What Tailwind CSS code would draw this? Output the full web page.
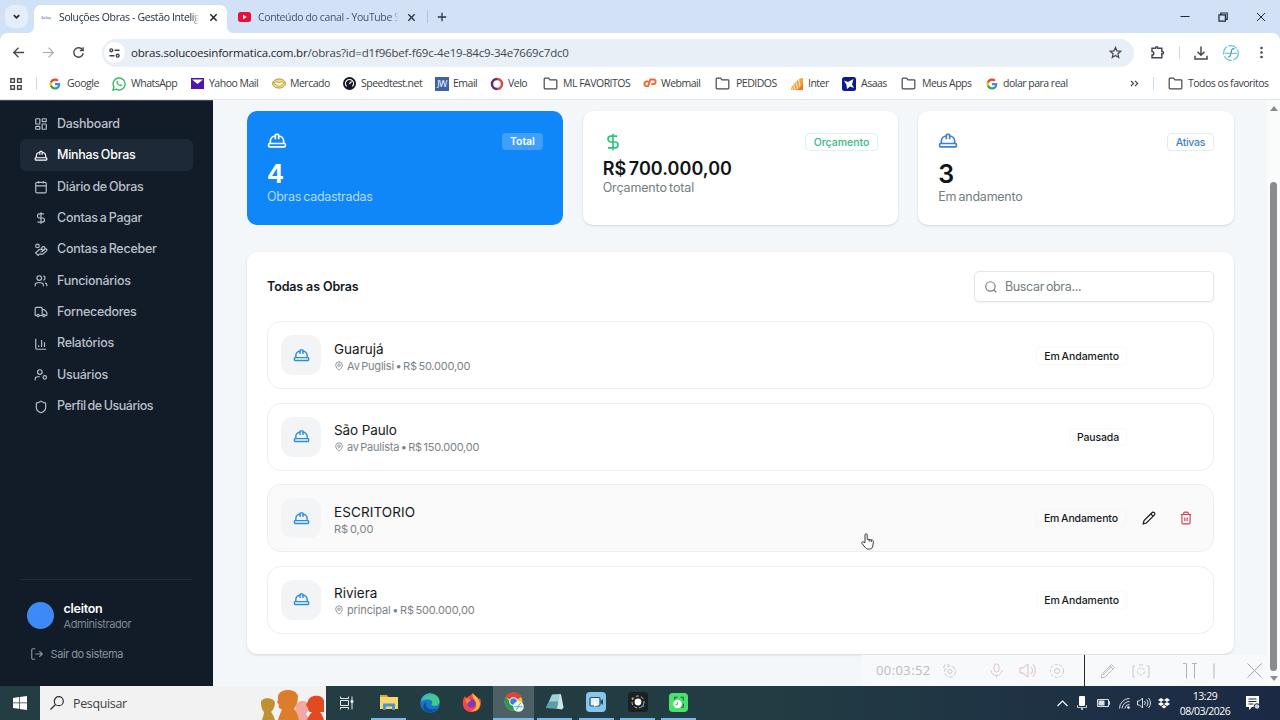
<!DOCTYPE html>
<html lang="pt-BR">
<head>
    <meta charset="UTF-8">
    <meta name="viewport" content="width=device-width, initial-scale=1.0">
    <title>Soluções Obras - Gestão Inteligente</title>
    <script src="https://cdn.jsdelivr.net/npm/@tailwindcss/browser@4"></script>
</head>
<body class="w-[1280px] h-[720px] overflow-hidden flex flex-col bg-white font-['Open_Sans','Noto_Sans',sans-serif] text-[#3c4043]">

    <!-- Icon sprite -->
    <svg class="hidden">
        <symbol id="hat" viewBox="0 0 24 24"><path d="M2 18a1 1 0 0 0 1 1h18a1 1 0 0 0 1-1v-2a1 1 0 0 0-1-1H3a1 1 0 0 0-1 1v2z"/><path d="M10 10V5a1 1 0 0 1 1-1h2a1 1 0 0 1 1 1v5"/><path d="M4 15v-3a6 6 0 0 1 6-6"/><path d="M14 6a6 6 0 0 1 6 6v3"/></symbol>
        <symbol id="dollar" viewBox="0 0 24 24"><path d="M12 2v20"/><path d="M17 5H9.5a3.5 3.5 0 0 0 0 7h5a3.5 3.5 0 0 1 0 7H6"/></symbol>
        <symbol id="pin" viewBox="0 0 24 24"><path d="M20 10c0 6-8 12-8 12s-8-6-8-12a8 8 0 0 1 16 0Z"/><circle cx="12" cy="10" r="3"/></symbol>
        <symbol id="search" viewBox="0 0 24 24"><circle cx="11" cy="11" r="8"/><path d="m21 21-4.3-4.3"/></symbol>
        <symbol id="folder" viewBox="0 0 16 14"><path d="M1.2 2.2a.9.9 0 0 1 .9-.9h3.7l1.7 1.8h6.4a.9.9 0 0 1 .9.9v7.8a.9.9 0 0 1-.9.9H2.1a.9.9 0 0 1-.9-.9z"/></symbol>
        <symbol id="google" viewBox="0 0 24 24"><path fill="#4285f4" d="M22.5 12.3c0-.8-.1-1.5-.2-2.2H12v4.2h5.9a5 5 0 0 1-2.2 3.3v2.8h3.6c2.1-2 3.2-4.8 3.2-8.1z"/><path fill="#34a853" d="M12 23c3 0 5.5-1 7.3-2.6l-3.6-2.8a6.7 6.7 0 0 1-9.9-3.5H2.2v2.8A11 11 0 0 0 12 23z"/><path fill="#fbbc05" d="M5.8 14.1a6.6 6.6 0 0 1 0-4.2V7.1H2.2a11 11 0 0 0 0 9.9z"/><path fill="#ea4335" d="M12 5.4c1.6 0 3.1.6 4.2 1.6l3.2-3.1A11 11 0 0 0 2.2 7.1l3.6 2.8A6.6 6.6 0 0 1 12 5.4z"/></symbol>
    </svg>

    <!-- Tab strip -->
    <div class="h-[33px] shrink-0 bg-[#d2e1f6] flex pl-[5px] text-[10.5px]">
        <div class="w-[23px] h-[23px] mt-[5px] rounded-lg bg-[#e3edfb] flex items-center justify-center">
            <svg class="size-[9px] fill-none stroke-[#1f2937] stroke-2" viewBox="0 0 10 10"><path d="M2 3.5 5 6.5 8 3.5"/></svg>
        </div>
        <svg class="w-[6px] h-[6px] self-end fill-white" viewBox="0 0 6 6"><path d="M6 0v6H0a6 6 0 0 0 6-6z"/></svg>
        <div class="w-[193px] h-[28px] mt-[5px] rounded-t-[7px] bg-white flex items-center pl-[7px] pr-[9px] pb-[3px]">
            <span class="w-[18px] text-[4px] leading-none italic font-bold text-[#7f9db5]">Soluç</span>
            <span class="whitespace-nowrap tracking-[-0.37px] text-[#1f2937] mask-r-from-95%">Soluções Obras - Gestão Intelig</span>
            <svg class="ml-auto size-[9px] fill-none stroke-[#1f1f1f] stroke-[1.6]" viewBox="0 0 10 10"><path d="m1.5 1.5 7 7m0-7-7 7"/></svg>
        </div>
        <svg class="w-[6px] h-[6px] self-end fill-white" viewBox="0 0 6 6"><path d="M0 0v6h6a6 6 0 0 1-6-6z"/></svg>
        <div class="w-[186px] flex items-center pl-[5px] pt-px">
            <svg class="w-[13px] h-[10px]" viewBox="0 0 13 10"><rect width="13" height="10" rx="2.5" fill="#e8103a"/><path d="M5 2.7v4.6L8.8 5z" fill="#fff"/></svg>
            <span class="ml-[7px] w-[141px] pt-px whitespace-nowrap tracking-[-0.38px] text-[#44546a] mask-r-from-94%">Conteúdo do canal - YouTube S</span>
            <svg class="ml-[8px] size-[9px] fill-none stroke-[#2b3646] stroke-[1.5]" viewBox="0 0 10 10"><path d="m1.5 1.5 7 7m0-7-7 7"/></svg>
        </div>
        <div class="w-[29px] flex items-center pl-[8px]">
            <span class="w-px h-[13px] bg-[#a9c2ea]"></span>
        </div>
        <div class="self-center -ml-[11px]">
            <svg class="size-[10px] fill-none stroke-[#2b3646] stroke-[1.3]" viewBox="0 0 10 10"><path d="M5 .8v8.4M.8 5h8.4"/></svg>
        </div>
        <div class="ml-auto flex items-center gap-[28px] pr-[14px]">
            <svg class="size-[10px] fill-none stroke-[#1f2937] stroke-1" viewBox="0 0 10 10"><path d="M.5 4.5h9"/></svg>
            <svg class="size-[10px] fill-none stroke-[#1f2937] stroke-[1.2]" viewBox="0 0 10 10"><path d="M1 2.8h6.4v6.4H1zM2.8 2.6V1h6.4v6.4H7.6"/></svg>
            <svg class="size-[10px] fill-none stroke-[#1f2937] stroke-1" viewBox="0 0 10 10"><path d="m1 1 8 8m0-8-8 8"/></svg>
        </div>
    </div>

    <!-- Toolbar -->
    <div class="h-[39px] shrink-0 bg-[#d2e1f6]">
        <div class="h-full bg-white rounded-t-[8px] flex items-center pl-[12px]">
            <svg class="size-[13px] fill-none stroke-[#45494d] stroke-[1.4]" viewBox="0 0 14 14"><path d="M13 7H2M7 1.8 1.8 7 7 12.2"/></svg>
            <svg class="size-[13px] ml-[17px] fill-none stroke-[#a9adb1] stroke-[1.3]" viewBox="0 0 14 14"><path d="M1 7h11M7 1.8 12.2 7 7 12.2"/></svg>
            <svg class="size-[13px] ml-[17px] fill-none stroke-[#45494d] stroke-[1.5]" viewBox="0 0 14 14"><path d="M11.5 4.4a5.1 5.1 0 1 0 .6 3.4M12 1.3v3.6H8.4"/></svg>
            <div class="ml-[17px] w-[1032px] h-[28px] rounded-full bg-[#e9eff6] flex items-center pl-[2px] pr-[12px]">
                <span class="size-[21px] rounded-full bg-white flex items-center justify-center">
                    <svg class="w-[11px] h-[10px] fill-none stroke-[#3c4043] stroke-[1.4]" viewBox="0 0 11 10"><circle cx="2.3" cy="2.3" r="1.4"/><path d="M5.5 2.3h5M.5 7.7h5"/><circle cx="8.7" cy="7.7" r="1.4"/></svg>
                </span>
                <span class="ml-[6px] pt-px text-[11.5px] tracking-[-0.19px] text-[#3f464d]"><span class="text-[#1f2429]">obras.solucoesinformatica.com.br</span>/obras?id=d1f96bef-f69c-4e19-84c9-34e7669c7dc0</span>
                <svg class="ml-auto size-[13px] fill-none stroke-[#45494d] stroke-[1.3]" viewBox="0 0 14 14"><path d="m7 1.5 1.6 3.8 4.1.4-3.1 2.7.9 4L7 10.3l-3.5 2.1.9-4-3.1-2.7 4.1-.4z"/></svg>
            </div>
            <svg class="ml-[16px] size-[15px] fill-none stroke-[#45494d] stroke-[1.5]" viewBox="0 0 15 15"><path d="M2 3.2h3.6V2.8a1.1 1.1 0 0 1 2.2 0v.4h4V6.6h.6a1.1 1.1 0 0 1 0 2.2h-.6v4H2V10a1.6 1.6 0 0 0 0-3.6z"/></svg>
            <span class="ml-[14px] w-px h-[13px] bg-[#c9dcf3]"></span>
            <svg class="ml-[14px] size-[14px] fill-none stroke-[#45494d] stroke-[1.5]" viewBox="0 0 14 14"><path d="M7 .5v8.5M3.5 5.8 7 9.2l3.5-3.4M1 9.8V13h12V9.8"/></svg>
            <svg class="ml-[15px] size-[16px] fill-none" viewBox="0 0 16 16"><circle cx="8" cy="8" r="7.3" stroke="#62c3cb" stroke-width="1.2" stroke-dasharray="9 1.5"/><path d="M11.5 3.8c-2.5-.6-3 1-3.3 3.2-.3 2.8-.7 5-3.2 5.2" stroke="#2fa7b5" stroke-width="1.3"/><path d="M2 8.3h12" stroke="#76a9b4"/></svg>
            <svg class="ml-[15px] w-[15px] h-[13px] fill-[#45494d]" viewBox="0 0 15 13"><circle cx="7.5" cy="2" r="1.3"/><circle cx="7.5" cy="6.5" r="1.3"/><circle cx="7.5" cy="11" r="1.3"/></svg>
        </div>
    </div>

    <!-- Bookmarks bar -->
    <div class="h-[28px] shrink-0 bg-white border-b border-[#dfe3e6] flex items-center pb-[4px] pl-[10px] text-[10.5px] tracking-[-0.5px] whitespace-nowrap">
        <svg class="w-[12px] h-[12px] mr-[14px] fill-none stroke-[#45494d] stroke-[1.4]" viewBox="0 0 12 12"><path d="M.8.8h3.6v3.6H.8zM7.6.8h3.6v3.6H7.6zM.8 7.6h3.6v3.6H.8zM7.6 7.6h3.6v3.6H7.6z"/></svg>
        <span class="w-px h-[13px] mr-[12px] bg-[#c9dcf3]"></span>
        <div class="w-[63px] flex items-center tracking-[-0.4px]"><svg class="size-[12px] mr-[6px]"><use href="#google"/></svg>Google</div>
        <div class="w-[78px] flex items-center"><svg class="size-[14px] mr-[5px] fill-none" viewBox="0 0 14 14"><path d="M1 13l.9-3.1A6 6 0 1 1 4.2 12.2z" stroke="#3dbb68" stroke-width="1.4"/><path d="M4.7 4c.8-.6 1.1 0 1.4.9.2.5-.5.7-.3 1.2.5.9 1.2 1.5 2.1 1.8.5.1.7-.8 1.2-.6.8.3 1.4.6.9 1.3C8.8 10.5 3 7.5 4.7 4z" fill="#3dbb68"/></svg>WhatsApp</div>
        <div class="w-[82px] flex items-center"><svg class="w-[13px] h-[11px] mr-[5px] ml-px" viewBox="0 0 13 11"><path fill="#5015b0" d="M0 0h13v11H0z"/><path fill="#fff" d="M1 1.5h11L6.5 6z"/></svg>Yahoo Mail</div>
        <div class="w-[70px] flex items-center"><svg class="w-[14px] h-[11px] mr-[4px]" viewBox="0 0 14 11"><ellipse cx="7" cy="5.5" rx="6.5" ry="4.6" fill="#f0dc74" stroke="#ab9a46"/><path d="M1.5 4.6 5 3.8l2 1 2-1 3.5.8-3 2.8-2.5 1-2.5-1z" fill="#f6f2dc" stroke="#9a8c42" stroke-width=".6"/></svg>Mercado</div>
        <div class="w-[93px] flex items-center"><svg class="size-[13px] mr-[5px] ml-px" viewBox="0 0 13 13"><circle cx="6.5" cy="6.5" r="6.5" fill="#141528"/><path d="M3.6 9.3a4 4 0 1 1 5.8 0M6.3 6.8l2.2-2.3" fill="none" stroke="#fff" stroke-width="1.2"/></svg>Speedtest.net</div>
        <div class="w-[55px] flex items-center"><span class="size-[14px] mr-[4px] bg-[#3e62a8] text-white text-[9px] leading-[14px] text-center tracking-[-0.5px]">JW</span>Email</div>
        <div class="w-[53px] flex items-center"><svg class="size-[14px] mr-[4px] fill-none" viewBox="0 0 14 14"><path d="M7 2a5 5 0 0 0 0 10" stroke="#5c2c78" stroke-width="2.5"/><path d="M7 2a5 5 0 0 1 0 10" stroke="#d9453f" stroke-width="2.5"/></svg>Velo</div>
        <div class="w-[100px] flex items-center"><svg class="w-[15px] h-[13px] mr-[5px] fill-none stroke-[#45494d] stroke-[1.3]"><use href="#folder"/></svg>ML FAVORITOS</div>
        <div class="w-[72px] flex items-center"><svg class="w-[14px] h-[11px] mr-[4px] fill-none stroke-[#ec6a35] stroke-[1.9]" viewBox="0 0 14 11"><path d="M5.5 3.5H3.7a2.3 2.3 0 0 0 0 4.6h1.5L7.3 1.5h3a2.3 2.3 0 0 1 0 4.6H8.2"/></svg>Webmail</div>
        <div class="w-[76px] flex items-center"><svg class="w-[15px] h-[13px] mr-[6px] fill-none stroke-[#45494d] stroke-[1.3]"><use href="#folder"/></svg>PEDIDOS</div>
        <div class="w-[51px] flex items-center"><svg class="w-[12px] h-[12px] mr-[5px]" viewBox="0 0 12 12"><path fill="#f5a342" d="M0 12V8.5l2-1V6l2-.5V4l2.3-1V2L9 .5 12 0v12z"/><path d="M1.5 11.5 0 7.5M4 11.5 2 5.5M7 11 4.5 3M9.5 11 7.5 1" fill="none" stroke="#fff" stroke-width=".8"/><path d="M5 12c3-1 5-4 7-7v7z" fill="#ec7a1c"/></svg>Inter</div>
        <div class="w-[59px] flex items-center"><svg class="size-[14px] mr-[5px]" viewBox="0 0 14 14"><rect width="14" height="14" rx="2.5" fill="#0a1a94"/><path fill="#fff" d="M2 3.5 6 5l5.5-3L10 7.5 12 11 8 9.5 5 12l-.5-4z"/></svg>Asaas</div>
        <div class="w-[85px] flex items-center"><svg class="w-[15px] h-[13px] mr-[6px] fill-none stroke-[#45494d] stroke-[1.3]"><use href="#folder"/></svg>Meus Apps</div>
        <div class="flex items-center"><svg class="size-[12px] mr-[5px]"><use href="#google"/></svg>dolar para real</div>
        <svg class="ml-auto size-[9px] fill-none stroke-[#3c4043] stroke-[1.3]" viewBox="0 0 10 10"><path d="m1 2 3 3-3 3M5.5 2l3 3-3 3"/></svg>
        <span class="w-px h-[13px] ml-[14px] mr-[14px] bg-[#c9dcf3]"></span>
        <div class="w-[112px] flex items-center"><svg class="w-[15px] h-[13px] mr-[5px] fill-none stroke-[#45494d] stroke-[1.3]"><use href="#folder"/></svg>Todos os favoritos</div>
    </div>

    <!-- Page -->
    <div class="h-[586px] shrink-0 flex bg-[#f4f7f9] font-['Inter','Open_Sans',sans-serif]">

        <!-- Sidebar -->
        <aside class="w-[213px] bg-[#121b28] border-t border-[#3c4956] pl-[20px] pr-[20px] flex flex-col text-[#b9c0ca]">
            <nav class="pt-[7px] flex flex-col text-[12.5px] font-medium tracking-[-0.27px] [word-spacing:-1px]">
                <a class="h-[31.35px] pl-[13.5px] pt-[1.5px] flex items-center gap-[9.5px]"><svg class="size-[14px] fill-none stroke-current stroke-2" viewBox="0 0 24 24"><rect width="7" height="9" x="3" y="3" rx="1"/><rect width="7" height="5" x="14" y="3" rx="1"/><rect width="7" height="9" x="14" y="12" rx="1"/><rect width="7" height="5" x="3" y="16" rx="1"/></svg>Dashboard</a>
                <a class="h-[31.35px] pl-[13.5px] pt-[1.5px] flex items-center gap-[9.5px] rounded-md bg-[#1e2937] text-white"><svg class="size-[14px] fill-none stroke-current stroke-2"><use href="#hat"/></svg>Minhas Obras</a>
                <a class="h-[31.35px] pl-[13.5px] pt-[1.5px] flex items-center gap-[9.5px]"><svg class="size-[14px] fill-none stroke-current stroke-2" viewBox="0 0 24 24"><path d="M8 2v4M16 2v4M3 10h18"/><rect width="18" height="18" x="3" y="4" rx="2"/></svg>Diário de Obras</a>
                <a class="h-[31.35px] pl-[13.5px] pt-[1.5px] flex items-center gap-[9.5px]"><svg class="size-[14px] fill-none stroke-current stroke-2"><use href="#dollar"/></svg>Contas a Pagar</a>
                <a class="h-[31.35px] pl-[13.5px] pt-[1.5px] flex items-center gap-[9.5px]"><svg class="size-[14px] fill-none stroke-current stroke-2" viewBox="0 0 24 24"><path d="M11 15h2a2 2 0 1 0 0-4h-3c-.6 0-1.1.2-1.4.6L3 17"/><path d="m7 21 1.6-1.4c.3-.4.8-.6 1.4-.6h4c1.1 0 2.1-.4 2.8-1.2l4.6-4.4a2 2 0 0 0-2.75-2.91l-4.2 3.9"/><path d="m2 16 6 6"/><circle cx="16" cy="9" r="2.9"/><circle cx="6" cy="5" r="3"/></svg>Contas a Receber</a>
                <a class="h-[31.35px] pl-[13.5px] pt-[1.5px] flex items-center gap-[9.5px]"><svg class="size-[14px] fill-none stroke-current stroke-2" viewBox="0 0 24 24"><path d="M16 21v-2a4 4 0 0 0-4-4H6a4 4 0 0 0-4 4v2"/><circle cx="9" cy="7" r="4"/><path d="M22 21v-2a4 4 0 0 0-3-3.87M16 3.13a4 4 0 0 1 0 7.75"/></svg>Funcionários</a>
                <a class="h-[31.35px] pl-[13.5px] pt-[1.5px] flex items-center gap-[9.5px]"><svg class="size-[14px] fill-none stroke-current stroke-2" viewBox="0 0 24 24"><path d="M14 18V6a2 2 0 0 0-2-2H4a2 2 0 0 0-2 2v11a1 1 0 0 0 1 1h2M15 18H9M19 18h2a1 1 0 0 0 1-1v-3.65a1 1 0 0 0-.22-.62l-3.48-4.35A1 1 0 0 0 17.52 8H14"/><circle cx="17" cy="18" r="2"/><circle cx="7" cy="18" r="2"/></svg>Fornecedores</a>
                <a class="h-[31.35px] pl-[13.5px] pt-[1.5px] flex items-center gap-[9.5px]"><svg class="size-[14px] fill-none stroke-current stroke-2" viewBox="0 0 24 24"><path d="M3 3v16a2 2 0 0 0 2 2h16M8 17v-3M13 17V5M18 17V9"/></svg>Relatórios</a>
                <a class="h-[31.35px] pl-[13.5px] pt-[1.5px] flex items-center gap-[9.5px]"><svg class="size-[14px] fill-none stroke-current stroke-2" viewBox="0 0 24 24"><circle cx="10" cy="7" r="4"/><path d="M10 15H6a4 4 0 0 0-4 4v2"/><circle cx="18.5" cy="16" r="3"/></svg>Usuários</a>
                <a class="h-[31.35px] pl-[13.5px] pt-[1.5px] flex items-center gap-[9.5px]"><svg class="size-[14px] fill-none stroke-current stroke-2" viewBox="0 0 24 24"><path d="M20 13c0 5-3.5 7.5-7.66 8.95a1 1 0 0 1-.67-.01C7.5 20.5 4 18 4 13V6a1 1 0 0 1 1-1c2 0 4.5-1.2 6.24-2.72a1.17 1.17 0 0 1 1.52 0C14.51 3.81 17 5 19 5a1 1 0 0 1 1 1z"/></svg><span class="tracking-[-0.45px]">Perfil de Usuários</span></a>
            </nav>
            <div class="mt-auto h-[107px] border-t border-[#1f2a38] pt-[21px]">
                <div class="flex items-center pl-[6.5px] gap-[10px]">
                    <span class="size-[27px] -mt-px rounded-full bg-linear-to-br from-[#3b8df8] to-[#3f86f7]"></span>
                    <div class="flex flex-col">
                        <span class="text-[12.5px] leading-[16px] font-semibold text-white tracking-[-0.25px]">cleiton</span>
                        <span class="text-[11px] leading-[14px] text-[#7f8996] tracking-[-0.4px]">Administrador</span>
                    </div>
                </div>
                <div class="mt-[15px] pl-[10px] flex items-center gap-[6.5px] text-[11px] leading-[16px] text-[#8a939f] tracking-[-0.4px] [word-spacing:-0.5px]">
                    <svg class="size-[14px] fill-none stroke-current stroke-2" viewBox="0 0 24 24"><path d="M9 21H5a2 2 0 0 1-2-2V5a2 2 0 0 1 2-2h4M16 17l5-5-5-5M21 12H9"/></svg>Sair do sistema
                </div>
            </div>
        </aside>

        <!-- Content -->
        <main class="w-[1054px] pt-[11px] pl-[34px] pr-[33px] flex flex-col">
            <div class="grid grid-cols-3 gap-[20px] h-[114px] shrink-0">
                <div class="rounded-[10px] bg-[#1087f8] px-[20px] pt-[20px] text-white">
                    <div class="flex items-center justify-between h-[20px]">
                        <svg class="size-[20px] fill-none stroke-current stroke-2"><use href="#hat"/></svg>
                        <span class="h-[17px] px-[8px] rounded-[4px] bg-white/20 text-[10.5px] leading-[17px] font-semibold tracking-[-0.1px]">Total</span>
                    </div>
                    <p class="mt-[8px] text-[25px] leading-[30px] font-bold">4</p>
                    <p class="text-[12.5px] leading-[16px] text-[#b5dafd] tracking-[-0.3px] [word-spacing:-1px]">Obras cadastradas</p>
                </div>
                <div class="rounded-[10px] bg-white shadow-sm px-[20px] pt-[20px] text-[#0f1417]">
                    <div class="flex items-center justify-between h-[21px]">
                        <svg class="size-[20px] fill-none stroke-[#2cc47e] stroke-2"><use href="#dollar"/></svg>
                        <span class="h-[18px] px-[8px] rounded-[4px] border border-[#dcf5ea] text-[10.5px] leading-[17px] font-medium text-[#35b983]">Orçamento</span>
                    </div>
                    <p class="mt-[6px] text-[18px] leading-[22px] font-semibold tracking-[0.05px] [word-spacing:-2px]">R$ 700.000,00</p>
                    <p class="text-[12.5px] leading-[16px] text-[#737d80] tracking-[-0.15px] [word-spacing:-1px]">Orçamento total</p>
                </div>
                <div class="rounded-[10px] bg-white shadow-sm px-[20px] pt-[20px] text-[#0f1417]">
                    <div class="flex items-center justify-between h-[20px]">
                        <svg class="size-[20px] fill-none stroke-[#3f80cf] stroke-2"><use href="#hat"/></svg>
                        <span class="mt-px h-[18px] px-[8px] rounded-[4px] border border-[#dfedf7] text-[10.5px] leading-[17px] font-medium text-[#3f7fc8] tracking-[-0.3px]">Ativas</span>
                    </div>
                    <p class="mt-[8px] text-[25px] leading-[30px] font-semibold">3</p>
                    <p class="text-[12.5px] leading-[16px] text-[#737d80] tracking-[-0.25px] [word-spacing:-1px]">Em andamento</p>
                </div>
            </div>

            <!-- Works list -->
            <section class="mt-[27px] h-[402px] shrink-0 rounded-[10px] bg-white shadow-sm px-[20px] pt-[19px]">
                <div class="flex items-center justify-between h-[31px]">
                    <h2 class="pt-[2px] text-[12.5px] font-semibold text-[#14181b] tracking-[-0.13px]">Todas as Obras</h2>
                    <div class="w-[240px] h-[31px] rounded-[5px] border border-[#e3e6e8] shadow-xs flex items-center pl-[9px] gap-[7px] text-[12.5px] leading-[20px] text-[#737d80] tracking-[-0.35px] [word-spacing:-1.3px]">
                        <svg class="size-[14px] fill-none stroke-[#737d80] stroke-2"><use href="#search"/></svg><span class="pt-px">Buscar obra...</span>
                    </div>
                </div>
                <div class="mt-[19px] flex flex-col gap-[13.5px]">
                    <div class="h-[68px] rounded-[14px] border border-[#eceef0] px-[13px] flex items-center">
                        <span class="size-[40px] rounded-[12px] bg-[#f2f4f6] flex items-center justify-center"><svg class="size-[17px] fill-none stroke-[#2b8fd6] stroke-2"><use href="#hat"/></svg></span>
                        <div class="ml-[13px] pt-[5px] flex flex-col">
                            <span class="text-[13.5px] leading-[17px] text-[#16191c]">Guarujá</span>
                            <span class="flex items-center gap-[3px] text-[11px] leading-[16px] text-[#7b8287] tracking-[-0.2px] [word-spacing:-1.3px]"><svg class="size-[10px] fill-none stroke-current stroke-2"><use href="#pin"/></svg>Av Puglisi • R$ 50.000,00</span>
                        </div>
                        <span class="ml-auto mr-[73px] mt-px h-[18px] px-[7px] rounded-[4px] border border-[#f8f9f9] text-[10.5px] leading-[17px] font-medium text-[#16191c] tracking-[-0.05px] [word-spacing:-1px]">Em Andamento</span>
                    </div>
                    <div class="h-[68px] rounded-[14px] border border-[#eceef0] px-[13px] flex items-center">
                        <span class="size-[40px] rounded-[12px] bg-[#f2f4f6] flex items-center justify-center"><svg class="size-[17px] fill-none stroke-[#2b8fd6] stroke-2"><use href="#hat"/></svg></span>
                        <div class="ml-[13px] pt-[3px] flex flex-col">
                            <span class="text-[13.5px] leading-[17px] text-[#16191c] tracking-[-0.1px]">São Paulo</span>
                            <span class="flex items-center gap-[3px] text-[11px] leading-[16px] text-[#7b8287] tracking-[-0.23px] [word-spacing:-1.3px]"><svg class="size-[10px] fill-none stroke-current stroke-2"><use href="#pin"/></svg>av Paulista • R$ 150.000,00</span>
                        </div>
                        <span class="ml-auto mr-[73px] h-[18px] px-[7px] rounded-[4px] border border-[#f8f9f9] text-[10.5px] leading-[17px] font-medium text-[#16191c] tracking-[-0.15px]">Pausada</span>
                    </div>
                    <div class="h-[68px] rounded-[14px] border border-[#eceef0] bg-[#fafafa] px-[13px] flex items-center">
                        <span class="size-[40px] rounded-[12px] bg-[#f2f4f6] flex items-center justify-center"><svg class="size-[17px] fill-none stroke-[#2b8fd6] stroke-2"><use href="#hat"/></svg></span>
                        <div class="ml-[13px] pt-[4px] flex flex-col">
                            <span class="text-[13.5px] leading-[17px] text-[#16191c] tracking-[0.1px]">ESCRITORIO</span>
                            <span class="flex items-center gap-[3px] text-[11px] leading-[16px] text-[#7b8287] [word-spacing:-1.3px]">R$ 0,00</span>
                        </div>
                        <span class="ml-auto h-[18px] px-[7px] rounded-[4px] border border-[#f5f6f6] text-[10.5px] leading-[17px] font-medium text-[#16191c] tracking-[-0.1px] [word-spacing:-1px]">Em Andamento</span>
                        <svg class="ml-[16px] size-[14px] fill-none stroke-[#16191c] stroke-2" viewBox="0 0 24 24"><path d="M17 3a2.85 2.83 0 1 1 4 4L7.5 20.5 2 22l1.5-5.5Z"/><path d="m15 5 4 4"/></svg>
                        <svg class="ml-[22.5px] mr-[7.5px] size-[14px] fill-none stroke-[#cf4258] stroke-2" viewBox="0 0 24 24"><path d="M3 6h18M19 6v14c0 1-1 2-2 2H7c-1 0-2-1-2-2V6M8 6V4c0-1 1-2 2-2h4c1 0 2 1 2 2v2M10 11v6M14 11v6"/></svg>
                    </div>
                    <div class="h-[68px] rounded-[14px] border border-[#eceef0] px-[13px] flex items-center">
                        <span class="size-[40px] rounded-[12px] bg-[#f2f4f6] flex items-center justify-center"><svg class="size-[17px] fill-none stroke-[#2b8fd6] stroke-2"><use href="#hat"/></svg></span>
                        <div class="ml-[13px] pt-[3px] flex flex-col">
                            <span class="text-[13.5px] leading-[17px] text-[#16191c]">Riviera</span>
                            <span class="flex items-center gap-[3px] text-[11px] leading-[16px] text-[#7b8287] tracking-[-0.14px] [word-spacing:-1.3px]"><svg class="size-[10px] fill-none stroke-current stroke-2"><use href="#pin"/></svg>principal • R$ 500.000,00</span>
                        </div>
                        <span class="ml-auto mr-[73px] h-[18px] px-[7px] rounded-[4px] border border-[#f8f9f9] text-[10.5px] leading-[17px] font-medium text-[#16191c] tracking-[-0.05px] [word-spacing:-1px]">Em Andamento</span>
                    </div>
                </div>
            </section>
        </main>

        <!-- Scrollbar -->
        <div class="w-[13px] bg-[#fafbfb] flex flex-col items-center pt-[6px] pb-[5px]">
            <svg class="w-[8px] h-[5px] fill-[#8b8b8d]" viewBox="0 0 8 5"><path d="M4 0l4 5H0z"/></svg>
            <span class="mt-[71px] w-[7px] h-[489px] rounded-full bg-[#8b8b8d]"></span>
            <svg class="mt-auto w-[8px] h-[5px] fill-[#8b8b8d]" viewBox="0 0 8 5"><path d="M0 0h8L4 5z"/></svg>
        </div>
    </div>

    <!-- Screen recorder bar, nearly transparent over the page -->
    <div class="absolute left-[862px] top-[655px] w-[405px] h-[31px] bg-[#f8f9fa] flex items-center text-[#c9c9c9]">
        <span class="ml-[14px] w-[58px] text-[13px] tracking-[0.4px] text-[#bcbcbc]">00:03:52</span>
        <svg class="ml-[8px] size-[15px] fill-none stroke-current stroke-1" viewBox="0 0 15 15"><circle cx="8" cy="8.5" r="5.5" stroke-dasharray="4 1.5"/><circle cx="8" cy="8.5" r="2"/><path d="M3 1.5 1.5 5M5 1l2 1"/></svg>
        <svg class="ml-[32px] size-[15px] fill-none stroke-[#dcc6c9] stroke-1" viewBox="0 0 15 15"><rect x="5" y="1" width="5" height="8" rx="2.5"/><path d="M2 7a5.5 5.5 0 0 0 11 0M7.5 12.5v2"/></svg>
        <svg class="ml-[15px] w-[18px] h-[15px] fill-none stroke-[#dbbcc0] stroke-1" viewBox="0 0 18 15"><path d="M1 5h3l5-4v13l-5-4H1zM12 4a5 5 0 0 1 0 7M14 1.5a9 9 0 0 1 0 12"/></svg>
        <svg class="ml-[12px] size-[16px] fill-none stroke-current stroke-1" viewBox="0 0 16 16"><circle cx="8" cy="8" r="6.5" stroke-dasharray="3 1.6"/><circle cx="8" cy="8" r="2.5"/></svg>
        <span class="ml-[19px] w-px h-[32px] bg-[#25282b]"></span>
        <svg class="ml-[15px] size-[16px] fill-none stroke-[#bdbdbd] stroke-1" viewBox="0 0 16 16"><path d="m1 15 1-4L11.5 1.5l3 3L5 14zM10 3l3 3M3 12l8-8"/></svg>
        <svg class="ml-[16px] w-[18px] h-[16px] fill-none stroke-current stroke-1" viewBox="0 0 18 16"><path d="M3 3H1v11h2M15 3h2v11h-2M7 2h4"/><circle cx="9" cy="8.5" r="3.5" stroke-dasharray="3 1.2"/></svg>
        <svg class="ml-[33px] w-[32px] h-[16px] fill-none stroke-[#b3b3b3] stroke-1" viewBox="0 0 32 16"><path d="M0 .5h3M3.5.5v15M11.5.5v15M9 .5h5M31 .5v15"/></svg>
        <svg class="ml-[32px] size-[15px] fill-none stroke-[#a5a5a5] stroke-1" viewBox="0 0 15 15"><path d="m.5.5 14 14m0-14-14 14"/></svg>
    </div>

    <!-- Hand cursor -->
    <svg class="absolute left-[861px] top-[533px] w-[13px] h-[17px] fill-white stroke-[#3a3a3a] stroke-1" viewBox="0 0 13 17"><path d="M4 9.8V1.9C4 .3 6.2.3 6.2 1.9V6.2l5 .9c.9.2 1.3.8 1.2 1.7l-.6 4.2c-.2 1.8-1.4 3-3.2 3H7c-1.2 0-2.1-.5-2.8-1.5L.9 10.3c-.7-1.1.6-2 1.5-1.3z"/><path d="M8.2 6.6v2M10.3 7v2" fill="none"/></svg>

    <!-- Taskbar -->
    <div class="grow bg-linear-to-r from-[#243d42] via-[#223c43] via-60% to-[#1b2945] flex items-stretch text-white">
        <div class="w-[40px] flex items-center justify-center">
            <svg class="size-[14px] fill-white" viewBox="0 0 14 14"><path d="M0 2l6-.9v5.5H0zM6.7 1 14 0v6.6H6.7zM0 7.3h6v5.5L0 12zM6.7 7.3H14V14l-7.3-1z"/></svg>
        </div>
        <div class="w-[286px] bg-[#f2f2f2] flex items-center pl-[10px] text-[#404040]">
            <svg class="size-[14px] fill-none stroke-[#2e2e2e] stroke-[1.2]" viewBox="0 0 14 14"><circle cx="8.8" cy="5.2" r="4.5"/><path d="M5.5 8.5.5 13.5"/></svg>
            <span class="ml-[9px] pt-[2px] text-[12.5px] tracking-[-0.35px]">Pesquisar</span>
            <svg class="ml-auto w-[66px] h-[32px] self-end" viewBox="0 0 66 32">
                <path fill="#f2a8a0" d="M36 17c1-5 12-6 13 1 0 4-2 7-3 8l4 6H36v-5l-1-4z"/>
                <path fill="#bf9132" d="M1 14c1-5 13-5 14 1 0 4-2 7-4 9 2 2 3 5 4 8H2c1-3 2-6 2-8-2-2-3-5-3-10z"/>
                <path fill="#dd7d2b" d="M18 8c2-8 18-8 20 0 0 6-2 10-4 13 3 3 4 7 5 11H18c1-4 3-8 4-11-3 0-4-2-3-4l-2-3 1-2z"/>
                <path fill="#e24a22" d="M48 13c2-7 15-7 16 0v11h-4c2 2 3 5 4 8H47c1-3 3-6 5-8-5 0-3-2-4-4l-2-3z"/>
            </svg>
        </div>
        <div class="w-[42px] flex items-center justify-center">
            <svg class="size-[14px] fill-none stroke-[#e5e9ea] stroke-1" viewBox="0 0 14 14"><path d="M.5 .5v2h8v-2M.5 4.5h8v5h-8zM.5 13.5v-2h8v2M12 .5v13"/><path d="M11 4.5h2v2h-2z" fill="#fff"/></svg>
        </div>
        <div class="w-[41px] px-[3px] flex"><div class="grow border-b-2 border-[#76b9ed] flex items-center justify-center">
            <svg class="w-[20px] h-[17px]" viewBox="0 0 20 17"><path fill="#dca52f" d="M1 1h7l1.5 2H1z"/><path fill="#f8d672" d="M1 3h18v12H1z"/><path fill="#4b95ca" d="M4 16V9.5h12V16h-3v-3.5H7V16z"/></svg>
        </div></div>
        <div class="w-[42px] flex items-center justify-center">
            <svg class="size-[20px]" viewBox="0 0 20 20"><circle cx="10" cy="10" r="9.8" fill="#1b76c8"/><path fill="#41cb86" d="M1.5 6.5C4-.5 14-1.5 18 4c3 4.5 1.5 9-3 9-3 0-4-1-3-2.5 1-2-1-4-3.5-4-3 0-5.5 0-7 2z"/><path fill="#38b2dd" d="M1.5 6.5C5-1 13-.5 15 3 10 1 4 4 1 9z"/><path fill="#124f98" d="M6 11c0 5 6 7 11 4-2 4-8 6-12 3-3-3-2-7 1-9z"/></svg>
        </div>
        <div class="w-[42px] flex items-center justify-center">
            <svg class="size-[20px]" viewBox="0 0 20 20"><path fill="#f5454a" d="M1 8c0-2 1-4 2-5l1 2 3-2c1 0 2-2 4-3 0 2 5 4 6 6l1-1c3 7-1 14-8 14S0 14 1 8z"/><path fill="#ffb63a" d="M11 0c0 2 7 5 7 11 0 5-5 8-9 7 4-1 6-4 5-8C13 6 9 4 11 0z"/><circle cx="9.5" cy="10.5" r="4.2" fill="#7a3bc9"/><path fill="#ff8430" d="M3 6c3-1 5 0 6 2-2 0-3 1-3 3-2-1-3-3-3-5z"/></svg>
        </div>
        <div class="w-[41px] bg-[#4d6066] border-b-2 border-[#76b9ed] flex items-center justify-center">
            <svg class="size-[20px]" viewBox="0 0 20 20"><circle cx="9.5" cy="9.5" r="9" fill="#f4c430"/><path fill="#dd4437" d="M1.7 5A9 9 0 0 1 17.3 5L9.5 9.5z"/><path fill="#dd4437" d="M1.7 5h15.6A9 9 0 0 0 1.7 5z"/><path fill="#279a58" d="M1.7 5A9 9 0 0 0 9.5 18.5l3-6-5-1z"/><circle cx="9.5" cy="9.5" r="4.3" fill="#fff"/><circle cx="9.5" cy="9.5" r="3.3" fill="#3b7de0"/><circle cx="14.5" cy="14.5" r="5.3" fill="#eaf7f8"/><path d="M17 11.5c-3 0-2 5-5 6M10.5 14.7h8" stroke="#4fa9b5" fill="none"/></svg>
        </div>
        <div class="w-[41px] px-[3px] flex"><div class="grow border-b-2 border-[#76b9ed] flex items-center justify-center">
            <svg class="w-[18px] h-[18px]" viewBox="0 0 18 18"><path fill="#cfe5e4" d="M13 1l2 .3 2.500 13-1.500 2.200-6-1z"/><path fill="#9fd3d4" d="M6 1.500 14 1l-3 14.500-11-.5z"/><path fill="#5d9ea4" d="M3 8.500h9.300L11 15.500l-11-.5z"/></svg>
        </div></div>
        <div class="w-[42px] px-[3.5px] flex"><div class="grow border-b-2 border-[#76b9ed] flex items-center justify-center">
            <svg class="size-[20px]" viewBox="0 0 20 20"><rect width="20" height="20" rx="4" fill="#86c5ee"/><rect x="4" y="5.5" width="10" height="8.5" rx="1.5" fill="#dff1fb" stroke="#274b62" stroke-width="1.2"/><path d="m14.5 9 2.5-2v6l-2.5-2z" fill="#274b62"/><path d="M8 9v6l2-1.5 2 .5z" fill="#fff"/></svg>
        </div></div>
        <div class="w-[41px] px-[3px] flex"><div class="grow border-b-2 border-[#76b9ed] flex items-center justify-center">
            <svg class="size-[20px]" viewBox="0 0 20 20"><rect width="20" height="20" rx="3" fill="#1d2023"/><circle cx="10" cy="10" r="3.4" fill="#fff"/><circle cx="10" cy="10" r="6" fill="none" stroke="#b9c4c4" stroke-width="1" stroke-dasharray="3 2.1"/><circle cx="4.5" cy="6.5" r="1" fill="#e39a3c"/><circle cx="15" cy="14" r="1" fill="#47b8e8"/></svg>
        </div></div>
        <div class="w-[41px] px-[3px] flex"><div class="grow border-b-2 border-[#76b9ed] flex items-center justify-center">
            <svg class="size-[19px]" viewBox="0 0 20 20"><rect width="20" height="20" rx="4" fill="#4ce16e"/><path d="M6 7V4.5h3M12 4.5h3V8M15 11v4h-2" fill="none" stroke="#1c6a35" stroke-width="1.2"/><circle cx="9" cy="11.5" r="4.5" fill="#fff"/><path d="M9 9.5V12H7" fill="none" stroke="#3ab25b"/></svg>
        </div></div>
        <div class="ml-auto flex items-center">
            <svg class="w-[11px] h-[7px] mr-[9px] fill-none stroke-white stroke-[1.1]" viewBox="0 0 11 7"><path d="M.5 6 5.5 1l5 5"/></svg>
            <svg class="w-[10px] h-[14px] mr-[9px] fill-white" viewBox="0 0 10 14"><rect x="2" width="6" height="10" rx="1"/><path d="M0 9h1v2h8V9h1v3H6v2H4v-2H0z" fill="#b5bdc9"/></svg>
            <svg class="w-[14px] h-[8px] mr-[9px]" viewBox="0 0 14 8"><path d="M1.5.5h11v7h-11zM12.5 2.5h1v3h-1" fill="none" stroke="#dbe0e6"/><path d="M2.5 1.5h6v5h-6z" fill="#dbe0e6"/></svg>
            <svg class="w-[11px] h-[11px] mr-[7px] fill-none stroke-[#dbe0e6] stroke-1" viewBox="0 0 11 11"><path d="M.5 10.5a10 10 0 0 1 10-10M3 10.5a7.5 7.5 0 0 1 7.5-7M5.8 10.5a5 5 0 0 1 4.7-4.2"/><circle cx="9.5" cy="9.5" r="1" fill="#fff"/></svg>
            <svg class="w-[15px] h-[12px] mr-[6px] fill-none stroke-[#dbe0e6] stroke-1" viewBox="0 0 15 12"><path d="M.5 4h2l3-3v10l-3-3h-2zM7.5 4a3 3 0 0 1 0 4M9.5 2.5a5 5 0 0 1 0 7M11.5 1a8 8 0 0 1 0 10"/></svg>
            <svg class="w-[12px] h-[11px] mr-[8px] fill-white" viewBox="0 0 12 11"><path d="M3 0l3 2-3 2-3-2zM9 0l3 2-3 2-3-2zM3 4l3 2-3 2-3-2zM9 4l3 2-3 2-3-2zM6 7l2.500 1.700L6 10.500 3.500 8.700z"/></svg>
            <div class="w-[54px] pt-px text-center text-[10.5px] leading-[15px] tracking-[-0.5px]">13:29<br>08/03/2026</div>
            <svg class="ml-[14px] mr-[20px] size-[14px]" viewBox="0 0 14 14"><path fill="#fff" d="M0 0h13v11H6l-3 3v-3H0z"/><path stroke="#1b2945" d="M2.5 3h8M2.5 5.5h8M2.5 8h5"/><circle cx="11" cy="10.5" r="2.8" fill="#c9d0da" stroke="#1b2945"/></svg>
        </div>
    </div>

</body>
</html>
